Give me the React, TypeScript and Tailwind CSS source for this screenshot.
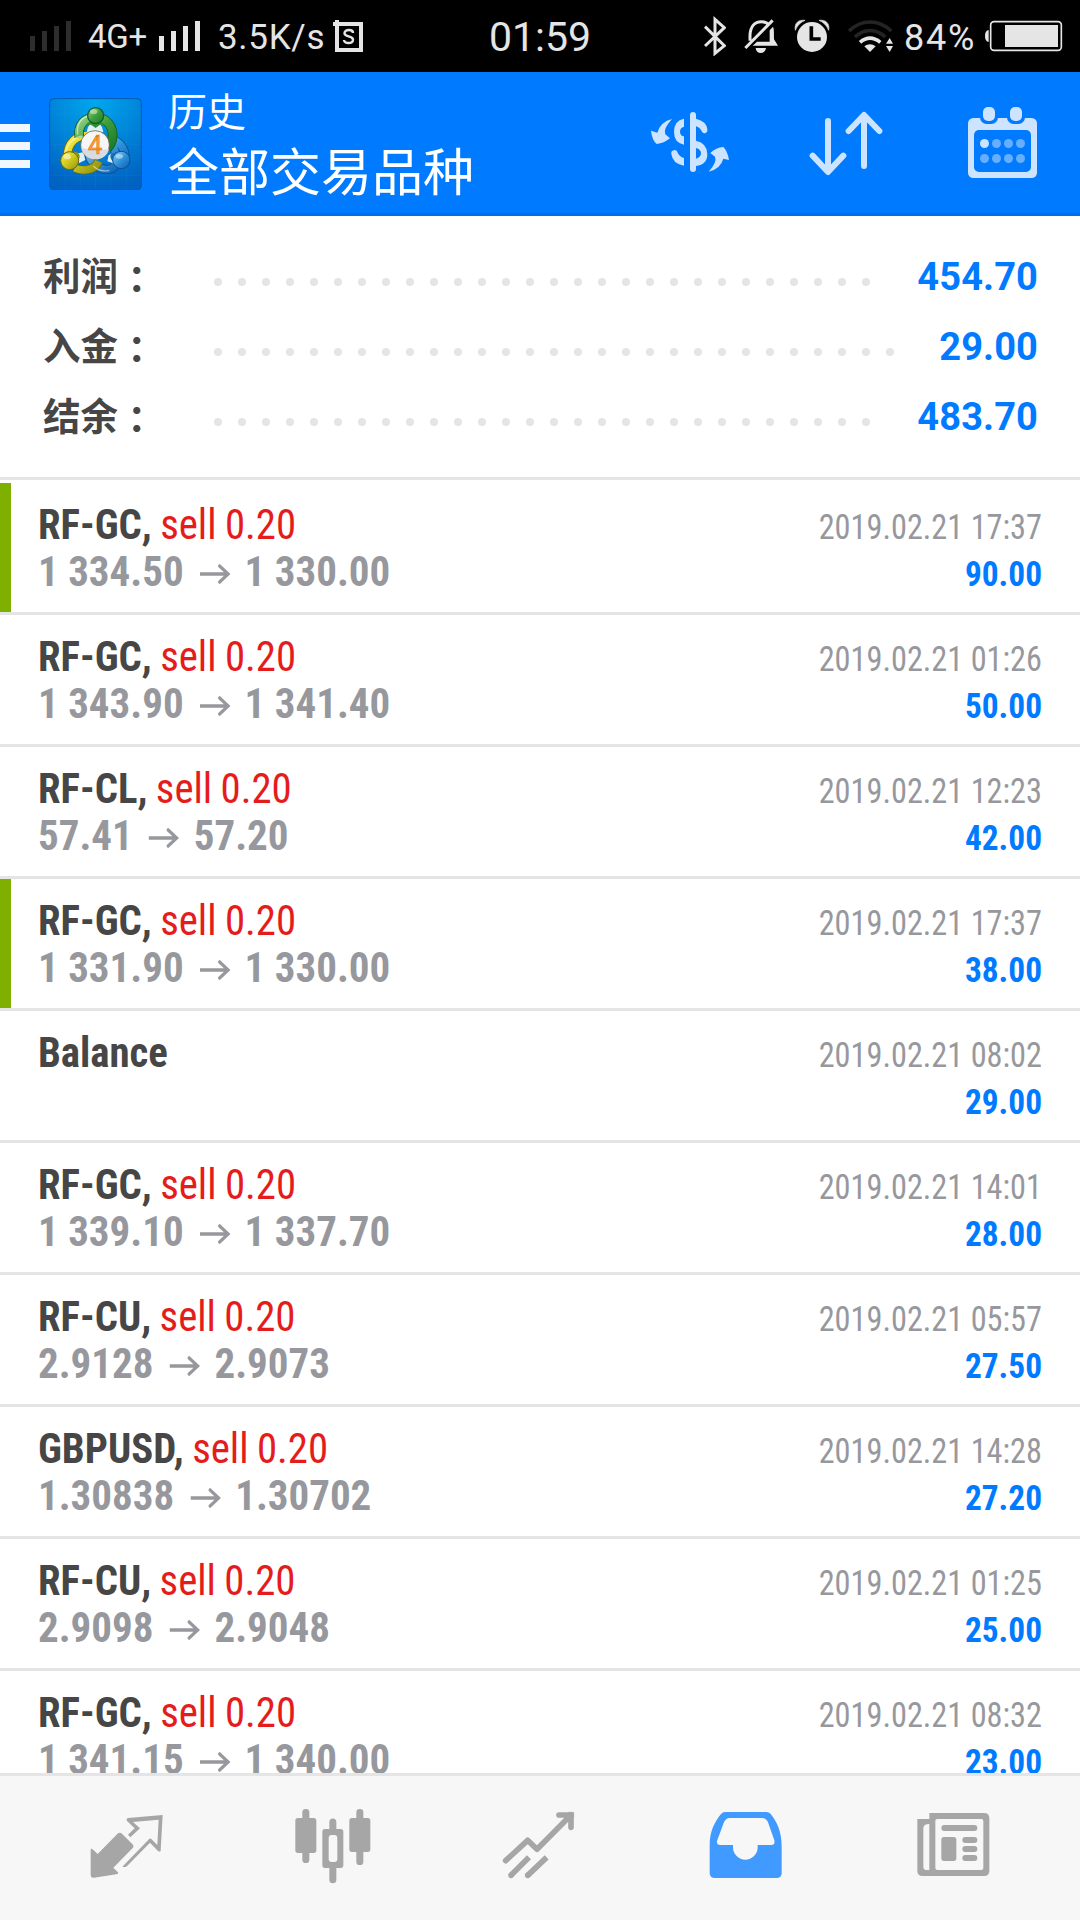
type Deal = {
  symbol: string;
  volume?: string;
  open?: string;
  close?: string;
  time: string;
  profit: string;
  marked?: boolean;
};

const summary = [
  { label: "利润", value: "454.70", dots: 28 },
  { label: "入金", value: "29.00", dots: 29 },
  { label: "结余", value: "483.70", dots: 28 },
];

const deals: Deal[] = [
  { symbol: "RF-GC,", volume: "sell 0.20", open: "1 334.50", close: "1 330.00", time: "2019.02.21 17:37", profit: "90.00", marked: true },
  { symbol: "RF-GC,", volume: "sell 0.20", open: "1 343.90", close: "1 341.40", time: "2019.02.21 01:26", profit: "50.00" },
  { symbol: "RF-CL,", volume: "sell 0.20", open: "57.41", close: "57.20", time: "2019.02.21 12:23", profit: "42.00" },
  { symbol: "RF-GC,", volume: "sell 0.20", open: "1 331.90", close: "1 330.00", time: "2019.02.21 17:37", profit: "38.00", marked: true },
  { symbol: "Balance", time: "2019.02.21 08:02", profit: "29.00" },
  { symbol: "RF-GC,", volume: "sell 0.20", open: "1 339.10", close: "1 337.70", time: "2019.02.21 14:01", profit: "28.00" },
  { symbol: "RF-CU,", volume: "sell 0.20", open: "2.9128", close: "2.9073", time: "2019.02.21 05:57", profit: "27.50" },
  { symbol: "GBPUSD,", volume: "sell 0.20", open: "1.30838", close: "1.30702", time: "2019.02.21 14:28", profit: "27.20" },
  { symbol: "RF-CU,", volume: "sell 0.20", open: "2.9098", close: "2.9048", time: "2019.02.21 01:25", profit: "25.00" },
  { symbol: "RF-GC,", volume: "sell 0.20", open: "1 341.15", close: "1 340.00", time: "2019.02.21 08:32", profit: "23.00" },
];

const Signal = () => (
  <div className="flex h-[30px] items-end gap-[7px]">
    <i className="h-[15px] w-[5px] bg-current" />
    <i className="h-5 w-[5px] bg-current" />
    <i className="h-[25px] w-[5px] bg-current" />
    <i className="h-[30px] w-[5px] bg-current" />
  </div>
);

const StatusBar = () => (
  <div className="flex h-[72px] shrink-0 items-center bg-black font-['Roboto',sans-serif] text-[#e5e5e5]">
    <div className="flex w-[489px] items-center pl-[30px]">
      <div className="text-[#2d2d2d]">
        <Signal />
      </div>
      <span className="ml-[17px] w-[71px] text-[33px] leading-none tracking-[-0.3px]">4G+</span>
      <Signal />
      <span className="mt-0.5 ml-[18px] w-[115px] text-[35px] leading-none tracking-[0.7px] whitespace-nowrap">3.5K/s</span>
      <svg className="h-8 w-[30px]" viewBox="0 0 30 32">
        <path d="M0 2h2V0h4v2h24v30H2V6H0zM6 6v22h20V6z" fill="currentColor" fillRule="evenodd" />
        <path d="M20 13c0-2-2-3-4-3-3 0-4.500 1.500-4.500 3.200 0 4.300 8.500 2 8.500 6.600 0 2-2 3.200-4.500 3.200S11 22 11 20" fill="none" stroke="currentColor" strokeWidth="2.400" />
      </svg>
    </div>
    <span className="mt-0.5 text-[41px] leading-none">01:59</span>
    <div className="ml-auto flex items-center pr-4">
      <svg className="h-10 w-[22px]" viewBox="42 18 66 120">
        <path d="M45 50l58 57-28 23V28l28 25-58 55" fill="none" stroke="currentColor" strokeWidth="9" />
      </svg>
      <svg className="ml-[18px] h-10 w-[35px]" viewBox="162 18 105 120">
        <path d="M180 92V76c1-26 14-41 34-41 9 0 17 3 23 9M166 114l82-83" fill="none" stroke="currentColor" strokeWidth="9" />
        <path d="M239 61l10-11c3 7 3 14 3 38l12 19h-76l13-12h38zM197 114h31c-2 10-7 15-16 15-8 0-14-5-15-15z" fill="currentColor" />
      </svg>
      <svg className="ml-[15px] h-10 w-9" viewBox="312 18 108 120">
        <circle cx="366" cy="81" r="45" fill="currentColor" />
        <path d="M316 61c-4-22 10-33 29-30-14 6-23 15-29 30zM416 61c4-22-10-33-29-30 14 6 23 15 29 30z" fill="currentColor" stroke="currentColor" strokeWidth="2" />
        <path d="M364 49v38h28" fill="none" stroke="#000" strokeWidth="11" />
      </svg>
      <svg className="ml-[17px] h-10 w-[47px]" viewBox="471 18 141 120" fill="none">
        <path d="M477 63c38-36 88-36 127 0M495 81c28-26 63-26 91 0" stroke="#242424" strokeWidth="11" />
        <path d="M510 97c19-16 41-16 61 0" stroke="currentColor" strokeWidth="11" />
        <path d="M523 109c11-8 23-8 34 0l-17 17zM588 101l11-17 10 17zM588 108h21l-10 18z" fill="currentColor" />
      </svg>
      <span className="mt-[3px] ml-2.5 w-20 text-[36px] leading-none tracking-[1.8px]">84%</span>
      <svg className="h-10 w-20" viewBox="882 18 240 120">
        <rect x="902" y="35" width="212" height="86" rx="10" fill="none" stroke="currentColor" strokeWidth="5" />
        <path d="M945 45h159v66H945zM896 60c-7 1-11 7-11 18s4 17 11 18z" fill="currentColor" />
      </svg>
    </div>
  </div>
);

const Logo = () => (
  <svg className="ml-[19px] h-[92px] w-[93px]" viewBox="27 24 279 276">
    <defs>
      <radialGradient id="tile" cx="0.5" cy="0" r="1">
        <stop offset="0" stopColor="#00a8ef" />
        <stop offset="1" stopColor="#0062c2" />
      </radialGradient>
      <linearGradient id="green" x2="1" y2="1">
        <stop offset="0" stopColor="#9bd68c" />
        <stop offset="0.5" stopColor="#3f9f3c" />
        <stop offset="1" stopColor="#1c7a2a" />
      </linearGradient>
      <linearGradient id="yellow" x2="1" y2="1">
        <stop offset="0" stopColor="#fff04a" />
        <stop offset="0.5" stopColor="#d0c81f" />
        <stop offset="1" stopColor="#8f9410" />
      </linearGradient>
      <linearGradient id="blue" x2="1" y2="1">
        <stop offset="0" stopColor="#8fd2f7" />
        <stop offset="0.5" stopColor="#2f93da" />
        <stop offset="1" stopColor="#0c5cb0" />
      </linearGradient>
    </defs>
    <rect x="29" y="26" width="275" height="273" rx="12" fill="url(#tile)" stroke="#0758ac" strokeWidth="3" />
    <path d="M75 28v268M121 28v268M167 28v268M213 28v268M259 28v268M31 72h271M31 118h271M31 164h271M31 210h271M31 256h271" stroke="#4cc0f5" strokeOpacity="0.12" strokeWidth="2" />
    <g fill="none">
      <path d="M216 162c14 28 26 76-14 76-30 0-52-18-56-50M222 150c24 12 34 30 34 54" stroke="#0b4f98" strokeWidth="27" />
      <path d="M216 162c14 28 26 76-14 76-30 0-52-18-56-50M222 150c24 12 34 30 34 54" stroke="url(#blue)" strokeWidth="22" />
      <path d="M148 138c-40-6-66 22-66 62M104 234c26 12 62 6 72-20" stroke="#6c6b0c" strokeWidth="27" />
      <path d="M148 138c-40-6-66 22-66 62M104 234c26 12 62 6 72-20" stroke="url(#yellow)" strokeWidth="22" />
      <path d="M118 142c-6-34 14-58 47-60 34 0 58 28 52 66-2 12-8 20-14 26" stroke="#135f22" strokeWidth="29" />
      <path d="M118 142c-6-34 14-58 47-60 34 0 58 28 52 66-2 12-8 20-14 26" stroke="url(#green)" strokeWidth="24" />
      <path d="M113 134c-4-30 8-48 30-56M77 190c4-30 22-46 50-52M160 228c14 14 30 17 48 13" stroke="#fff" strokeOpacity="0.5" strokeWidth="4" />
    </g>
    <path d="M144 112l8-12 13 8 13-8 8 12 4 14h-50zM108 192l22-6 6 24-20 10zM206 196l18-10 2 36-24-8z" fill="#dff0f2" />
    <path d="M138 106c6-18 46-18 54 0l-12-2-13 10-14-10z" fill="#318c3b" />
    <path d="M96 186c20-4 30 10 18 28l-6 14z" fill="#8c941c" />
    <path d="M234 186c-22-2-30 12-16 28l6 12z" fill="#1a6dbb" />
    <circle cx="167" cy="77" r="24" fill="url(#green)" stroke="#125f26" strokeWidth="4" />
    <circle cx="89" cy="212" r="27" fill="url(#yellow)" stroke="#686a10" strokeWidth="3" />
    <circle cx="244" cy="210" r="26" fill="url(#blue)" stroke="#0a4f96" strokeWidth="3" />
    <ellipse cx="161" cy="65" rx="11" ry="7" fill="#fff" fillOpacity="0.45" />
    <ellipse cx="82" cy="200" rx="11" ry="8" fill="#fff" fillOpacity="0.5" />
    <ellipse cx="238" cy="199" rx="11" ry="7" fill="#fff" fillOpacity="0.45" />
    <circle cx="165" cy="165" r="43" fill="#f6f6f8" stroke="#544d22" strokeWidth="2" />
    <path d="M123 172c20 8 50 12 84 4-4 22-22 32-42 32s-38-14-42-36z" fill="#d9dbe2" />
    <text x="165" y="191" textAnchor="middle" fill="#ffa53a" stroke="#e4761b" strokeWidth="2" className="font-['Roboto',sans-serif] text-[76px]">
      4
    </text>
  </svg>
);

const Header = () => (
  <header className="flex h-36 shrink-0 items-center bg-[#007aff] pr-[37px] shadow-[inset_0_-3px_0_#006fe8]">
    <div className="mt-1 flex flex-col gap-2.5">
      <i className="h-2 w-[30px] bg-[#f0f7ff]" />
      <i className="h-2 w-[30px] bg-[#f0f7ff]" />
      <i className="h-2 w-[30px] bg-[#f0f7ff]" />
    </div>
    <Logo />
    <div className="mb-1 ml-[26px] flex-1 font-['Noto_Sans_CJK_SC',sans-serif] whitespace-nowrap text-white">
      <div className="text-[39px] leading-[54px]">历史</div>
      <div className="text-[51px] leading-[66px]">全部交易品种</div>
    </div>
    <svg className="size-20" viewBox="60 42 240 240" fill="#cce4ff">
      <path d="M126 87Q98 118 106 133L120 145Q102 160 80 162Q66 150 63 122L82 128Q92 95 126 87Z" />
      <path d="M162 86Q132 92 132 125Q132 158 162 164V139Q150 137 150 125Q150 113 162 110Z" />
      <path d="M124 192A9 9 0 0 1 143 188Q148 200 162 204V227Q128 222 124 192Z" />
      <rect x="180" y="66" width="18" height="180" rx="9" />
      <path d="M198 86Q230 94 232 118A9 9 0 0 1 217 127Q210 112 198 109Z" />
      <path fillRule="evenodd" d="M198 152Q232 160 232 192Q232 224 198 228ZM198 174V206Q213 202 213 190Q213 178 198 174Z" />
      <path d="M236 245Q262 216 255 200L241 189Q258 172 280 171Q292 182 297 210L280 206Q272 236 236 245Z" />
    </svg>
    <svg className="ml-[76px] size-20" viewBox="528 42 240 240" fill="none" stroke="#cce4ff" strokeWidth="18" strokeLinecap="round" strokeLinejoin="round">
      <path d="M594 93v151M548 197l46 49 46-49M702 228V77M656 123l46-48 46 48" />
    </svg>
    <svg className="ml-[77px] size-20" viewBox="999 42 240 240" fill="#cce4ff">
      <rect x="1014" y="84" width="207" height="180" rx="16" />
      <rect x="1032" y="120" width="171" height="126" rx="15" fill="#007aff" />
      <rect x="1050" y="44" width="54" height="58" rx="20" fill="#007aff" />
      <rect x="1131" y="44" width="54" height="58" rx="20" fill="#007aff" />
      <rect x="1059" y="51" width="36" height="42" rx="15" />
      <rect x="1140" y="51" width="36" height="42" rx="15" />
      <circle cx="1063.500" cy="160.500" r="13.500" />
      <g fill="#66afff">
        <circle cx="1099.500" cy="160.500" r="13.500" />
        <circle cx="1135.500" cy="160.500" r="13.500" />
        <circle cx="1171.500" cy="160.500" r="13.500" />
        <circle cx="1063.500" cy="205.500" r="13.500" />
        <circle cx="1099.500" cy="205.500" r="13.500" />
        <circle cx="1135.500" cy="205.500" r="13.500" />
        <circle cx="1171.500" cy="205.500" r="13.500" />
      </g>
    </svg>
  </header>
);

const Summary = () => (
  <section className="h-[264px] shrink-0 border-b-3 border-[#e5e5e5] pt-[26px]">
    {summary.map((item) => (
      <div key={item.label} className="flex h-[70px] items-center pr-[42px] pl-[43px]">
        <div className="mb-[3px] flex w-[171px] text-[37.5px] leading-none font-bold text-[#464646]">
          <span className="font-['Noto_Sans_CJK_SC',sans-serif]">{item.label}</span>
          <span className="pt-[3px] font-['Noto_Sans_CJK_TC',sans-serif]">：</span>
        </div>
        <div className="flex gap-4 pt-2.5">
          {Array.from({ length: item.dots }, (_, i) => (
            <i key={i} className="size-2 rounded-full bg-[#e5e5e5]" />
          ))}
        </div>
        <span className="ml-auto font-['Roboto',sans-serif] text-[38px] leading-none font-bold tracking-[0.1px] text-[#007aff]">
          {item.value}
        </span>
      </div>
    ))}
  </section>
);

const DealRow = ({ deal }: { deal: Deal }) => (
  <div className="flex h-[132px] shrink-0 border-b-3 border-[#e5e5e5] font-['Roboto_Condensed','Roboto',sans-serif] whitespace-nowrap">
    <i className={deal.marked ? "w-[11px] bg-[#7fb000]" : "w-[11px]"} />
    <div className="flex flex-1 justify-between pt-[18px] pr-[38px] pl-[27px]">
      <div className="text-[43px] leading-[47px]">
        <div className="origin-left scale-x-[0.948] [word-spacing:-1px]">
          <span className="font-bold text-[#464646]">{deal.symbol}</span>{" "}
          <span className="text-[#e51c1c]">{deal.volume}</span>
        </div>
        {deal.open && (
          <div className="flex origin-left scale-x-[0.953] items-center font-bold text-[#97989d]">
            <span>{deal.open}</span>
            <svg className="mr-[15px] ml-[17px] mt-1 h-5 w-[32px]" viewBox="0 0 30 20" preserveAspectRatio="none" fill="currentColor">
              <path d="M0 8.300h23.500l-5.500-5.300q-1-2 1.500-3L30 10 19.500 20q-2.500-1-1.500-3l5.500-5.300H0z" />
            </svg>
            <span>{deal.close}</span>
          </div>
        )}
      </div>
      <div className="pt-[3px] text-right text-[35px] leading-[47px]">
        <div className="origin-right scale-x-[0.923] text-[#97989d]">{deal.time}</div>
        <div className="origin-right scale-x-[0.953] font-bold text-[#007aff]">{deal.profit}</div>
      </div>
    </div>
  </div>
);

const TabBar = () => (
  <nav className="flex h-[147px] shrink-0 items-center border-t-3 border-[#e5e5e5] bg-[#f7f7f7] px-6 text-[#a6a6a6]">
    <div className="flex flex-1 justify-center">
      <svg className="size-20" viewBox="22 39 240 240" fill="currentColor">
        <path d="M33 162L37 161L54 177L115 115Q121 111 127 116L160 149Q163 154 160 158L101 218L116 233Q116 237 110 238L43 248Q33 249 33 239Z" />
        <path d="M145 119L165 100L142 78Q139 71 145 69L249 60L243 167Q241 172 235 168L211 143L143 212Q139 217 133 216L128 215L205 136Q211 126 217 134L233 150L237 74L160 81L181 100L152 127Z" />
      </svg>
    </div>
    <div className="flex flex-1 justify-center">
      <svg className="size-20" viewBox="641 39 240 240" fill="currentColor">
        <rect x="645" y="69" width="63" height="105" rx="8" />
        <rect x="666" y="42" width="21" height="162" rx="10" />
        <path fillRule="evenodd" d="M734 102h47q8 0 8 8v101q0 8-8 8h-47q-8 0-8-8V110q0-8 8-8zM754 120q-9 0-9 9v63q0 9 9 9h8q9 0 9-9v-63q0-9-9-9z" />
        <path d="M747 104V81a10.500 10.500 0 0 1 21 0v23zM747 217v37a10.500 10.500 0 0 0 21 0v-37z" />
        <rect x="807" y="69" width="63" height="102" rx="8" />
        <rect x="828" y="42" width="21" height="168" rx="10" />
      </svg>
    </div>
    <div className="flex flex-1 justify-center">
      <svg className="size-20" viewBox="1260 39 240 240" fill="none" stroke="currentColor" strokeWidth="17">
        <path d="M1277 197l66-61 28 27 102-103M1437 60h36v37" strokeLinecap="round" strokeLinejoin="round" />
        <path d="M1293 241l54-54M1343 241l57-54" />
        <path d="M1293 241h.1M1343 241h.1" strokeLinecap="round" />
        <path d="M1465 51.500h16.500v17" strokeWidth="1" fill="currentColor" />
      </svg>
    </div>
    <div className="flex flex-1 justify-center text-[#409aff]">
      <svg className="size-20" viewBox="379 39 240 240" fill="currentColor">
        <path fillRule="evenodd" d="M390 150C390 110 405 80 424 57Q429 51 436 51H560Q568 51 573 57C592 80 606 110 606 155V235Q606 249 590 249H406Q390 249 390 235ZM412 138L432 84Q438 69 450 69H546Q560 69 565 82L584 136Q587 150 575 150H534V157A37 37 0 0 1 460 157V150H422Q410 150 412 138Z" />
      </svg>
    </div>
    <div className="flex flex-1 justify-center">
      <svg className="size-20" viewBox="998 39 240 240" fill="currentColor">
        <path fillRule="evenodd" d="M1047 54H1211Q1227 54 1227 70V227Q1227 243 1211 243H1027Q1011 243 1011 227V72H1047ZM1071 72Q1065 72 1065 78V219Q1065 225 1071 225H1203Q1209 225 1209 219V78Q1209 72 1203 72ZM1047 87Q1029 87 1029 100V215Q1029 225 1040 225H1047Z" />
        <rect x="1083" y="90" width="108" height="18" rx="9" />
        <rect x="1083" y="126" width="45" height="72" rx="8" />
        <rect x="1146" y="126" width="45" height="18" rx="9" />
        <rect x="1146" y="153" width="45" height="18" rx="9" />
        <rect x="1146" y="180" width="45" height="18" rx="9" />
      </svg>
    </div>
  </nav>
);

export default function App() {
  return (
    <div className="flex h-[1920px] w-[1080px] flex-col overflow-hidden bg-white">
      <StatusBar />
      <Header />
      <Summary />
      <main className="flex min-h-0 flex-1 flex-col overflow-hidden pt-[3px]">
        {deals.map((deal, i) => (
          <DealRow key={i} deal={deal} />
        ))}
      </main>
      <TabBar />
    </div>
  );
}
